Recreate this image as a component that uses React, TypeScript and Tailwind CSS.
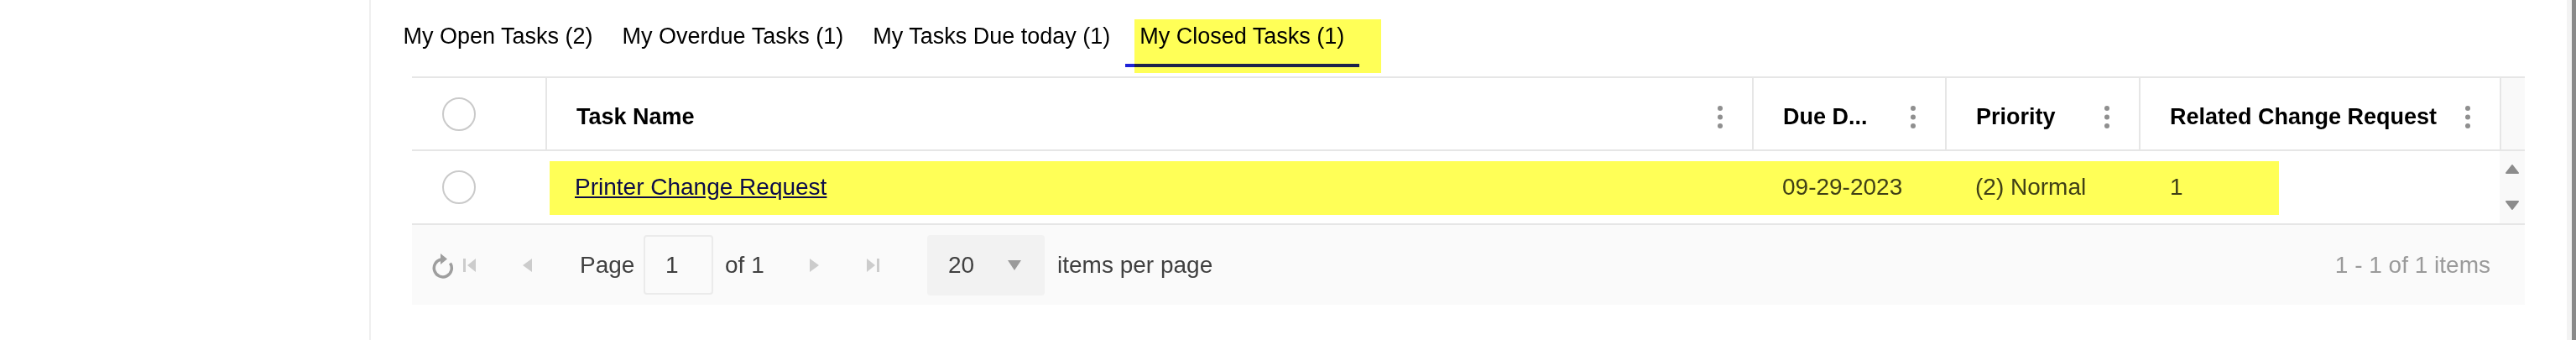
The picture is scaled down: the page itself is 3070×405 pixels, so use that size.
import React from "react";

const Kebab = () => (
  <svg width="6" height="27" viewBox="0 0 6 27" className="shrink-0">
    <circle cx="3" cy="3" r="3" fill="#8f8f8f" />
    <circle cx="3" cy="13.5" r="3" fill="#8f8f8f" />
    <circle cx="3" cy="24" r="3" fill="#8f8f8f" />
  </svg>
);

const Radio = () => (
  <div className="h-[40px] w-[40px] rounded-full border-2 border-[#cacaca] bg-white" />
);

const HeaderCell = ({ label, w }: { label: string; w: string }) => (
  <div className={`${w} flex items-center justify-between border-r-2 border-[#e6e6e6] pl-[35px] pr-[35px] pt-[7px]`}>
    <span className="font-bold text-[27px] text-black whitespace-nowrap">{label}</span>
    <Kebab />
  </div>
);

const Tab = ({ label, active }: { label: string; active?: boolean }) => (
  <div
    className={`relative px-[17.5px] pt-[25px] pb-[15px] text-[27px] leading-[36px] whitespace-nowrap border-b-4 ${
      active ? "border-[#1e22d8]" : "border-transparent"
    }`}
  >
    {label}
    {active && (
      <div className="absolute left-[11px] top-[23px] h-[64px] w-[294px] bg-[#ffff57] mix-blend-multiply" />
    )}
  </div>
);

export default function App() {
  return (
    <div className="flex h-[405px] w-[3070px] overflow-hidden bg-white text-black font-[family-name:'Liberation_Sans',Arial,sans-serif]">
      <div className="w-[440px] shrink-0" />
      <div className="flex-1 border-l-2 border-[#efefef]">
        {/* Tabs */}
        <div className="flex pl-[21px]">
          <Tab label="My Open Tasks (2)" />
          <Tab label="My Overdue Tasks (1)" />
          <Tab label="My Tasks Due today (1)" />
          <Tab label="My Closed Tasks (1)" active />
        </div>

        {/* Grid */}
        <div className="ml-[49px] mt-[11px] w-[2518px] border-t-2 border-[#e6e6e6]">
          {/* Header */}
          <div className="flex h-[87px] border-b-2 border-[#e6e6e6]">
            <div className="flex w-[161px] items-center border-r-2 border-[#e6e6e6] pl-[36px]">
              <Radio />
            </div>
            <HeaderCell label="Task Name" w="w-[1438px]" />
            <HeaderCell label="Due D..." w="w-[230px]" />
            <HeaderCell label="Priority" w="w-[231px]" />
            <HeaderCell label="Related Change Request" w="w-[430px]" />
            <div className="w-[28px] bg-[#f9f9f9]" />
          </div>

          {/* Body row */}
          <div className="relative flex h-[88px] border-b-2 border-[#e6e6e6] text-[28px] text-[#404040]">
            <div className="flex w-[161px] items-center pl-[36px]">
              <Radio />
            </div>
            <div className="flex w-[1438px] items-center pl-[33px]">
              <a className="text-[#0b0bd4] underline whitespace-nowrap">Printer Change Request</a>
            </div>
            <div className="flex w-[230px] items-center pl-[34px]">09-29-2023</div>
            <div className="flex w-[231px] items-center pl-[34px] whitespace-nowrap">(2) Normal</div>
            <div className="flex w-[428px] items-center pl-[35px]">1</div>
            <div className="flex w-[30px] flex-col items-center bg-[#f9f9f9] pt-[15px]">
              <svg width="18" height="13" viewBox="0 0 18 13">
                <path d="M9 2 L16 11 L2 11 Z" fill="#8c8c8c" stroke="#8c8c8c" strokeWidth="2" strokeLinejoin="round" />
              </svg>
              <svg width="18" height="13" viewBox="0 0 18 13" className="mt-[30px]">
                <path d="M2 2 L16 2 L9 11 Z" fill="#8c8c8c" stroke="#8c8c8c" strokeWidth="2" strokeLinejoin="round" />
              </svg>
            </div>
            <div className="absolute left-[164px] top-[12px] h-[64px] w-[2061px] bg-[#ffff57] mix-blend-multiply" />
          </div>

          {/* Pager */}
          <div className="flex h-[95px] items-center bg-[#fafafa] text-[28px] text-[#404040]">
            <svg width="30" height="32" viewBox="0 0 30 32" className="ml-[21px]">
              <path d="M14 9 A10.5 10.5 0 1 0 24.5 13.5" fill="none" stroke="#9e9e9e" strokeWidth="3.5" />
              <path d="M13 2 L21 8.5 L13 15 Z" fill="#9e9e9e" />
            </svg>
            <svg width="15" height="16" viewBox="0 0 15 16" className="ml-[10px]">
              <rect x="0" y="0" width="3" height="16" fill="#cccccc" />
              <path d="M15 0 L5 8 L15 16 Z" fill="#cccccc" />
            </svg>
            <svg width="13" height="16" viewBox="0 0 13 16" className="ml-[54px]">
              <path d="M13 0 L2 8 L13 16 Z" fill="#cccccc" />
            </svg>
            <span className="ml-[57px] inline-block w-[60px] whitespace-nowrap">Page</span>
            <div className="ml-[16px] flex h-[71px] w-[83px] items-center rounded-[4px] border-2 border-[#ebebeb] bg-[#fafafa] pl-[24px]">
              1
            </div>
            <span className="ml-[14px] inline-block w-[45px] whitespace-nowrap">of 1</span>
            <svg width="13" height="16" viewBox="0 0 13 16" className="ml-[56px]">
              <path d="M0 0 L11 8 L0 16 Z" fill="#cccccc" />
            </svg>
            <svg width="15" height="16" viewBox="0 0 15 16" className="ml-[55px]">
              <path d="M0 0 L10 8 L0 16 Z" fill="#cccccc" />
              <rect x="12" y="0" width="3" height="16" fill="#cccccc" />
            </svg>
            <div className="ml-[57px] flex h-[72px] w-[140px] items-center justify-between rounded-[4px] bg-[#f2f2f2] pl-[25px] pr-[28px]">
              <span>20</span>
              <svg width="16" height="12" viewBox="0 0 16 12">
                <path d="M0 0 L16 0 L8 12 Z" fill="#9a9a9a" />
              </svg>
            </div>
            <span className="ml-[15px] whitespace-nowrap">items per page</span>
            <span className="ml-auto pr-[41px] whitespace-nowrap text-[#9a9a9a]">1 - 1 of 1 items</span>
          </div>
        </div>
      </div>
      {/* page scrollbar */}
      <div className="flex w-[11px] shrink-0">
        <div className="w-[6px] bg-[#f3f3f3]" />
        <div className="w-[5px] bg-[#8a8a8a]" />
      </div>
    </div>
  );
}
